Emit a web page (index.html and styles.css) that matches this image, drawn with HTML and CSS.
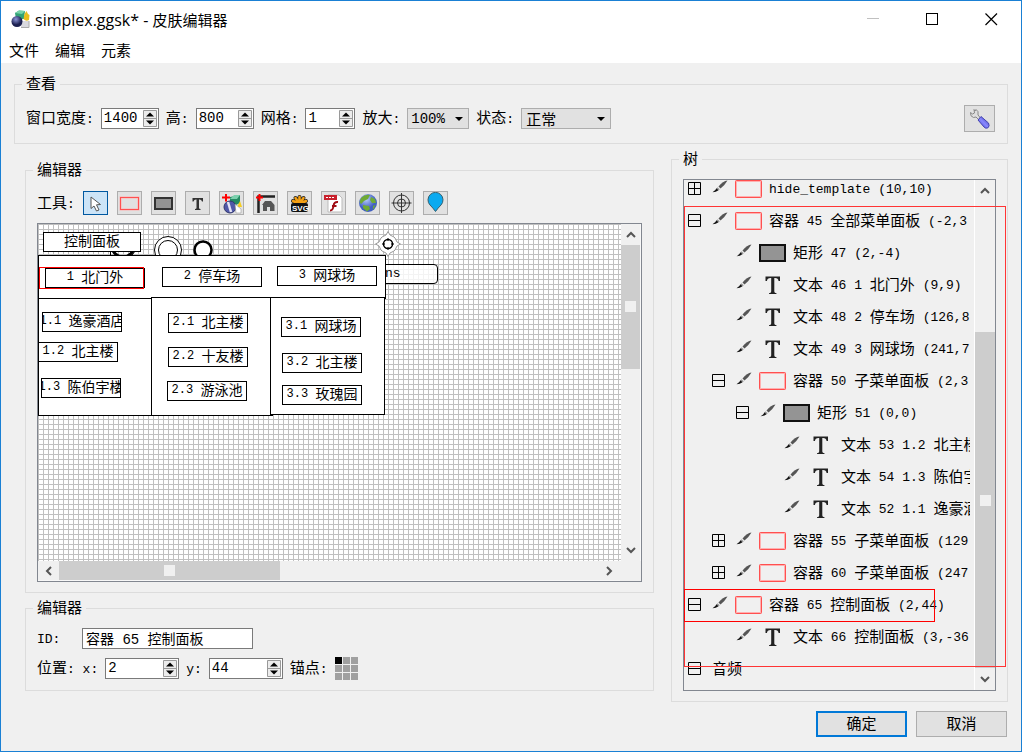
FILE: index.html
```html
<!DOCTYPE html>
<html lang="zh-CN">
<head>
<meta charset="utf-8">
<title>simplex.ggsk* - 皮肤编辑器</title>
<link rel="stylesheet" href="styles.css">
</head>
<body>
<svg class="defs" aria-hidden="true">
  <defs>
    <linearGradient id="handle" x1="0" y1="1" x2="1" y2="0"><stop offset="0" stop-color="#3838c0"/><stop offset=".5" stop-color="#8888ff"/><stop offset="1" stop-color="#2a2aa0"/></linearGradient>
    <radialGradient id="ball" cx=".4" cy=".3"><stop offset="0" stop-color="#8c94d8"/><stop offset="1" stop-color="#1c2050"/></radialGradient>
    <radialGradient id="sea" cx=".4" cy=".3"><stop offset="0" stop-color="#b8ccff"/><stop offset="1" stop-color="#4260c0"/></radialGradient>
    <symbol id="brush" viewBox="0 0 16 13"><path d="M15.500.500Q11 1 6.500 6.500L8.500 8.500Q13 5 15.500.500Z" fill="#555"/><path d="M5.500 7.200 7.800 9.200 6.500 10.300 4.500 8.500Z" fill="#999"/><path d="M4.500 8.300 6.500 10.200Q4 12 .500 12.200 3.500 10.800 4.500 8.300Z" fill="#111"/></symbol>
    <symbol id="box" viewBox="0 0 27 18"><rect x="1" y="1" width="25" height="16" rx="1" fill="none" stroke="#ffb0b0" stroke-width="2"/><rect x=".5" y=".5" width="26" height="17" rx="1" fill="none" stroke="#ff5050"/></symbol>
    <symbol id="rect" viewBox="0 0 27 18"><rect x="1" y="1" width="25" height="16" fill="#949494" stroke="#111" stroke-width="2"/></symbol>
    <symbol id="tee" viewBox="0 0 27 20"><path d="M6.500 1.500H21V6H19.600Q19.300 3 16 3H15.300V16.500Q15.300 18 17.500 18.200V19H10V18.200Q12.200 18 12.200 16.500V3H11.500Q8.200 3 7.900 6H6.500Z" fill="#222"/></symbol>
    <symbol id="up" viewBox="0 0 10 7"><path d="M1 6 5 2 9 6" fill="none" stroke="#555" stroke-width="2"/></symbol>
    <symbol id="down" viewBox="0 0 10 7"><path d="M1 1 5 5 9 1" fill="none" stroke="#555" stroke-width="2"/></symbol>
    <symbol id="minus" viewBox="0 0 13 13"><path d="M.5.5H12.500V12.500H.5ZM1 6.500H12" fill="none" stroke="#000"/></symbol>
    <symbol id="plus" viewBox="0 0 13 13"><path d="M.5.5H12.500V12.500H.5ZM1 6.500H12M6.500 1V12" fill="none" stroke="#000"/></symbol>
    <symbol id="spin" viewBox="0 0 14 17"><path d="M.5.5H13.500V16.500H.5ZM1 8.500H13" fill="#ececec" stroke="#999"/><path d="M3 6.500 7 2.500 11 6.500ZM3 10.500H11L7 14.500Z" fill="#000"/></symbol>
  </defs>
</svg>
<div class="window">
  <header class="titlebar">
    <svg class="logo" width="19" height="19" viewBox="0 0 19 19"><path d="M4 3 8 .5 14 1 13 9 5 9Z" fill="#32a276"/><path d="M4 3 8 .5 14 1 11 4Z" fill="#77d4aa"/><path d="M12.500 9 13.500 4 15.500 1 17 4 18.500 5 18 10Q15 12 12.500 9Z" fill="#e8be1c"/><path d="M10 11H18V18H10Z" fill="#d9d9df"/><path d="M10 17.500H18V11" stroke="#aaa" fill="none"/><circle cx="6" cy="11.500" r="5.500" fill="url(#ball)"/></svg>
    <h1>simplex.ggsk* - <span>皮肤编辑器</span></h1>
    <button class="win" aria-label="最小化"><svg width="13" height="13"><path d="M0 5.500H12" stroke="#c0c0c0"/></svg></button>
    <button class="win" aria-label="最大化"><svg width="13" height="13"><rect x=".5" y=".5" width="11" height="11" fill="none" stroke="#000"/></svg></button>
    <button class="win" aria-label="关闭"><svg width="13" height="13"><path d="M.5.5 12 12M12 .5.5 12" stroke="#000" stroke-width="1.200"/></svg></button>
  </header>
  <nav class="menu"><button>文件</button><button>编辑</button><button>元素</button></nav>

  <main>
    <fieldset class="view">
      <legend>查看</legend>
      <div class="row">
        <label for="w">窗口宽度<span class="m">:</span></label><span class="spin mid"><input id="w" value="1400"><svg><use href="#spin"/></svg></span>
        <label for="h">高<span class="m">:</span></label><span class="spin mid"><input id="h" value="800"><svg><use href="#spin"/></svg></span>
        <label for="g">网格<span class="m">:</span></label><span class="spin small"><input id="g" value="1"><svg><use href="#spin"/></svg></span>
        <label for="z">放大<span class="m">:</span></label><span class="drop zoom"><select id="z"><option>100%</option></select></span>
        <label for="s">状态<span class="m">:</span></label><span class="drop state"><select id="s"><option>正常</option></select></span>
        <button class="wrench" aria-label="设置"><svg width="22" height="22" viewBox="0 0 22 22"><path d="M5 1.500 5.500 5 3.500 6 1.500 4.500Q1 8.500 4.500 9.500L7 9 10.500 12.500 12 10.500 9 7Q10 3 7 1.500L6 3Z" fill="#ddd" stroke="#888"/><path d="M12 8.500 19.500 15Q21 18 19 19.800 16.500 21 15 19L9 12Z" fill="url(#handle)" stroke="#4444b0"/></svg></button>
      </div>
    </fieldset>

    <div class="columns">
      <div class="left">
        <fieldset class="editor">
          <legend>编辑器</legend>
          <div class="tools">
            <span class="tools-label">工具<span class="m">:</span></span>
            <button class="on" aria-label="选择"><svg viewBox="0 0 23 22"><path d="M7 5V16.500L10 14 12.500 19 15 18 12.500 12.800 16.500 12.500Z" fill="#fff" stroke="#555"/></svg></button>
            <button aria-label="容器"><svg viewBox="0 0 23 22"><rect x="2.500" y="5.500" width="18" height="12" fill="none" stroke="#ffb0b0" stroke-width="2"/><rect x="2.500" y="5.500" width="18" height="12" fill="none" stroke="#ff5050"/></svg></button>
            <button aria-label="矩形"><svg viewBox="0 0 23 22"><rect x="3" y="6" width="17" height="11" fill="#949494" stroke="#333" stroke-width="2"/></svg></button>
            <button aria-label="文本"><svg viewBox="0 0 23 22"><path d="M6.500 6H17V9.500H16Q15.500 7.500 13.500 7.500H13V16Q13 17 14.500 17V18H9V17Q10.500 17 10.500 16V7.500H10Q8 7.500 7.500 9.500H6.500Z" fill="#333"/></svg></button>
            <button aria-label="图片"><svg viewBox="0 0 23 22"><path d="M10 5 20 3 20 11 16 13 10 11Z" fill="#248a62"/><path d="M10 7 14 3H20L17 7Z" fill="#7bd0ad"/><path d="M17 15 20 9 22 15Z" fill="#f5ce20"/><circle cx="10" cy="15" r="6" fill="#5058a8" stroke="#30366c"/><path d="M8 10 11 20" stroke="#e4e4f4" stroke-width="2.500"/><path d="M15 12 21 17V21H16Z" fill="#fff" stroke="#888" stroke-width=".5"/><path d="M2 5.500H10M6 2V9.500" stroke="#f00" stroke-width="2"/></svg></button>
            <button aria-label="按钮"><svg viewBox="0 0 23 22"><path d="M4.500 21V4.500H21" stroke="#222" stroke-width="2.500" fill="none"/><path d="M8 13 11 9H17L20.500 13V19H16V15H13V19H9V13Z" fill="#555"/><path d="M2 5.500H9M5.500 2V9" stroke="#f00" stroke-width="2"/></svg></button>
            <button aria-label="SVG"><svg viewBox="0 0 23 22"><g stroke="#222" stroke-width="4" stroke-linecap="round"><path d="M11.500 12V5M11.500 12 5 9M11.500 12 18 9M11.500 12 7.500 6M11.500 12 15.500 6"/></g><g stroke="#f4a013" stroke-width="2.500" stroke-linecap="round"><path d="M11.500 12V5M11.500 12 5 9M11.500 12 18 9M11.500 12 7.500 6M11.500 12 15.500 6"/></g><rect x="3" y="11" width="17" height="9" rx="2" fill="#111"/><text x="4" y="19" font-family="Liberation Sans" font-size="8" font-weight="700" fill="#fff">SVG</text></svg></button>
            <button aria-label="SWF"><svg viewBox="0 0 23 22"><path d="M6 3H17L20 6V20H6Z" fill="#fff" stroke="#bbb"/><path d="M2 3H15V8H2Z" fill="#c8202c"/><path d="M4 5.500H12" stroke="#fff" stroke-width="1" stroke-dasharray="2 1"/><path d="M16 10Q12 9.500 11.500 14T8 18.500M10 14H14.500" stroke="#a00c14" stroke-width="2" fill="none"/></svg></button>
            <button aria-label="链接"><svg viewBox="0 0 23 22"><circle cx="12" cy="11" r="9" fill="url(#sea)"/><path d="M5 6Q9 2 14 3L12 7 8 9 5 12 3.500 10ZM15 5 19 7 20 11 16 11 14 8ZM7 13 13 14 14 17 11 19.500 7 16ZM17 14 19.500 13 17 18Z" fill="#6faa35"/></svg></button>
            <button aria-label="热点"><svg viewBox="0 0 23 22"><g fill="none" stroke="#333"><circle cx="11.500" cy="11" r="8"/><circle cx="11.500" cy="11" r="4"/><path d="M1.500 11H21.500M11.500 1V21"/></g></svg></button>
            <button aria-label="标记"><svg viewBox="0 0 23 22"><path d="M11.500 19.500Q9 16 6 13A7.500 7.500 0 1 1 17 13Q14 16 11.500 19.500Z" fill="#0aaaf0" stroke="#36606e"/></svg></button>
          </div>

          <div class="canvas">
            <div class="stage">
              <svg class="rings" width="200" height="50" viewBox="0 0 200 50"><g fill="none" stroke="#000"><circle cx="85" cy="22" r="11" stroke-width="3"/><path d="M72.500 26V31M98 26 94 31"/><circle cx="130" cy="26" r="13.500" fill="#fff"/><circle cx="130" cy="26" r="9.500" fill="#fff"/><circle cx="165" cy="26" r="8.500" stroke-width="2.500" fill="#fff"/></g></svg>
              <svg class="gear" width="26" height="26" viewBox="0 0 26 26"><path d="M13 .5 15 4 19 6 20 7 22 11 25.500 13 22 15 20 19 19 20 15 22 13 25.500 11 22 7 20 6 19 4 15 .5 13 4 11 6 7 7 6 11 4Z" fill="#fff" stroke="#999"/><circle cx="13" cy="13" r="4.500" fill="none" stroke="#000" stroke-width="1.500"/><path d="M13 7V10M13 16V19M7 13H10M16 13H19" stroke="#000"/></svg>
              <div class="hint">ns</div>
              <div class="panel p0"></div><div class="panel p1"></div><div class="panel p2"></div><div class="panel p3"></div>
              <div class="tag ctrl">控制面板</div>
              <div class="tag head t1"><i>1 </i>北门外</div>
              <div class="picked"></div>
              <div class="tag head t2"><i>2 </i>停车场</div>
              <div class="tag head t3"><i>3 </i>网球场</div>
              <div class="tag a1"><i>1.1 </i>逸豪酒店</div>
              <div class="tag a2"><i>1.2 </i>北主楼</div>
              <div class="tag a3"><i>1.3 </i>陈伯宇楼</div>
              <div class="tag b1"><i>2.1 </i>北主楼</div>
              <div class="tag b2"><i>2.2 </i>十友楼</div>
              <div class="tag b3"><i>2.3 </i>游泳池</div>
              <div class="tag c1"><i>3.1 </i>网球场</div>
              <div class="tag c2"><i>3.2 </i>北主楼</div>
              <div class="tag c3"><i>3.3 </i>玫瑰园</div>
            </div>
            <div class="vbar"><svg width="10" height="7"><use href="#up"/></svg><div class="track"><div class="thumb"></div></div><svg width="10" height="7"><use href="#down"/></svg></div>
            <div class="hbar"><svg width="7" height="10"><path d="M6 1 2 5 6 9" fill="none" stroke="#555" stroke-width="2"/></svg><div class="track"><div class="thumb"></div></div><svg width="7" height="10"><path d="M1 1 5 5 1 9" fill="none" stroke="#555" stroke-width="2"/></svg></div>
          </div>
        </fieldset>

        <fieldset class="props">
          <legend>编辑器</legend>
          <div class="row id-row"><label for="id"><span class="m">ID:</span></label><input id="id" class="text" value="容器 65 控制面板"></div>
          <div class="row"><label for="x">位置<span class="m">: x:</span></label><span class="spin wide"><input id="x" value="2"><svg><use href="#spin"/></svg></span>
            <label for="y"><span class="m">y:</span></label><span class="spin wide"><input id="y" value="44"><svg><use href="#spin"/></svg></span>
            <span>锚点<span class="m">:</span></span>
            <div class="anchor"><button class="on" aria-label="左上"></button><button aria-label="上"></button><button aria-label="右上"></button><button aria-label="左"></button><button aria-label="中"></button><button aria-label="右"></button><button aria-label="左下"></button><button aria-label="下"></button><button aria-label="右下"></button></div></div>
        </fieldset>
      </div>

      <div class="right">
        <fieldset class="treeset">
          <legend>树</legend>
          <div class="tree">
            <ul>
              <li><button aria-label="展开"><svg><use href="#plus"/></svg></button><svg class="br"><use href="#brush"/></svg><svg class="ic"><use href="#box"/></svg><span class="m">hide_template (10,10)</span></li>
              <li><button aria-label="折叠"><svg><use href="#minus"/></svg></button><svg class="br"><use href="#brush"/></svg><svg class="ic"><use href="#box"/></svg>容器<span class="m"> 45 </span>全部菜单面板<span class="m"> (-2,3</span></li>
              <li class="l1 leaf"><svg class="br"><use href="#brush"/></svg><svg class="ic"><use href="#rect"/></svg>矩形<span class="m"> 47 (2,-4)</span></li>
              <li class="l1 leaf"><svg class="br"><use href="#brush"/></svg><svg class="ic"><use href="#tee"/></svg>文本<span class="m"> 46 1 </span>北门外<span class="m"> (9,9)</span></li>
              <li class="l1 leaf"><svg class="br"><use href="#brush"/></svg><svg class="ic"><use href="#tee"/></svg>文本<span class="m"> 48 2 </span>停车场<span class="m"> (126,8</span></li>
              <li class="l1 leaf"><svg class="br"><use href="#brush"/></svg><svg class="ic"><use href="#tee"/></svg>文本<span class="m"> 49 3 </span>网球场<span class="m"> (241,7</span></li>
              <li class="l1"><button aria-label="折叠"><svg><use href="#minus"/></svg></button><svg class="br"><use href="#brush"/></svg><svg class="ic"><use href="#box"/></svg>容器<span class="m"> 50 </span>子菜单面板<span class="m"> (2,3</span></li>
              <li class="l2"><button aria-label="折叠"><svg><use href="#minus"/></svg></button><svg class="br"><use href="#brush"/></svg><svg class="ic"><use href="#rect"/></svg>矩形<span class="m"> 51 (0,0)</span></li>
              <li class="l3 leaf"><svg class="br"><use href="#brush"/></svg><svg class="ic"><use href="#tee"/></svg>文本<span class="m"> 53 1.2 </span>北主楼</li>
              <li class="l3 leaf"><svg class="br"><use href="#brush"/></svg><svg class="ic"><use href="#tee"/></svg>文本<span class="m"> 54 1.3 </span>陈伯宇楼</li>
              <li class="l3 leaf"><svg class="br"><use href="#brush"/></svg><svg class="ic"><use href="#tee"/></svg>文本<span class="m"> 52 1.1 </span>逸豪酒店</li>
              <li class="l1"><button aria-label="展开"><svg><use href="#plus"/></svg></button><svg class="br"><use href="#brush"/></svg><svg class="ic"><use href="#box"/></svg>容器<span class="m"> 55 </span>子菜单面板<span class="m"> (129</span></li>
              <li class="l1"><button aria-label="展开"><svg><use href="#plus"/></svg></button><svg class="br"><use href="#brush"/></svg><svg class="ic"><use href="#box"/></svg>容器<span class="m"> 60 </span>子菜单面板<span class="m"> (247</span></li>
              <li><button aria-label="折叠"><svg><use href="#minus"/></svg></button><svg class="br"><use href="#brush"/></svg><svg class="ic"><use href="#box"/></svg>容器<span class="m"> 65 </span>控制面板<span class="m"> (2,44)</span></li>
              <li class="l1 leaf"><svg class="br"><use href="#brush"/></svg><svg class="ic"><use href="#tee"/></svg>文本<span class="m"> 66 </span>控制面板<span class="m"> (3,-36</span></li>
              <li><button aria-label="折叠"><svg><use href="#minus"/></svg></button>音频</li>
            </ul>
            <div class="vbar"><svg width="10" height="7"><use href="#up"/></svg><div class="track"><div class="thumb"></div></div><svg width="10" height="7"><use href="#down"/></svg></div>
            <div class="mark mark-all"></div>
            <div class="mark mark-one"></div>
          </div>
        </fieldset>
        <div class="actions"><button class="primary">确定</button><button>取消</button></div>
      </div>
    </div>
  </main>
</div>
</body>
</html>
```
FILE: styles.css
```css
* { box-sizing: border-box; }
body { margin: 0; color: #000; font: 15px/20px "Noto Sans CJK SC", sans-serif; }
button, input, select { font: inherit; color: inherit; margin: 0; padding: 0; border: 0; background: none; border-radius: 0; outline: 0; }
button svg, .spin svg { display: block; }
.defs { position: absolute; width: 0; height: 0; }
.m { font-family: "Liberation Mono", monospace; font-size: 13px; white-space: pre; }

.window { min-height: 100vh; display: flex; flex-direction: column; border: 1px solid #1a80d4; background: #f0f0f0; }
.titlebar { height: 37px; display: flex; align-items: center; background: #fff; padding: 0 0 0 10px; }
.titlebar h1 { flex: 1; margin: 0 0 0 5px; font: 16px/20px "Open Sans", sans-serif; }
.titlebar h1 span { font: 15px/18px "Noto Sans CJK SC", sans-serif; }
.win { width: 59px; height: 37px; display: flex; align-items: center; justify-content: center; }
.menu { height: 25px; display: flex; gap: 16px; padding: 0 0 2px 8px; background: #fff; }

main { flex: 1; display: flex; flex-direction: column; padding: 11px 13px 14px; }
fieldset { margin: 0; min-width: 0; border: 1px solid #dcdcdc; }
legend { height: 20px; padding: 0 4px; line-height: 18px; }
.row { display: flex; align-items: center; gap: 7px; }

.view { padding: 11px 12px 11px 7px; }
.view .row { height: 27px; padding-left: 4px; }
.wrench { width: 31px; height: 27px; margin-left: auto; border: 1px solid #adadad; background: #e1e1e1; display: flex; align-items: center; justify-content: center; }

.spin { height: 21px; display: flex; align-items: center; padding-right: 1px; border: 1px solid #7a7a7a; background: #fff; }
.spin input { flex: 1; min-width: 0; height: 19px; padding-left: 2px; font: 14px/19px "Liberation Mono", monospace; }
.spin svg { width: 14px; height: 17px; flex: none; }
.mid { width: 58px; }
.small { width: 50px; }
.wide { width: 74px; }

.drop { position: relative; height: 21px; border: 1px solid #adadad; background: #e1e1e1; }
.drop select { width: 100%; height: 19px; padding-left: 4px; appearance: none; display: block; line-height: 19px; }
.drop::after { content: ""; position: absolute; right: 5px; top: 8px; border: 4px solid transparent; border-top-color: #000; border-bottom: 0; pointer-events: none; }
.zoom { width: 62px; }
.drop.zoom select { font: 14px/19px "Liberation Mono", monospace; padding: 1px 0 0 3px; }
.state { width: 90px; }

.columns { flex: 1; display: grid; grid-template-columns: minmax(0, 1fr) 337px; gap: 17px; padding-left: 11px; }
.left { display: flex; flex-direction: column; gap: 5px; padding: 16px 0 46px; }
.right { display: flex; flex-direction: column; gap: 9px; padding-top: 5px; }

.editor { flex: 1; display: flex; flex-direction: column; padding: 11px 11px 10px; }
.editor legend, .props legend { margin-left: -4px; }
.tools { display: flex; align-items: center; gap: 9px; margin-bottom: 8px; }
.tools-label { width: 37px; white-space: nowrap; }
.tools button { width: 25px; height: 24px; border: 1px solid #adadad; background: #e1e1e1; }
.tools button svg { width: 23px; height: 22px; }
.tools .on { border-color: #0058a0; background: #cce4f7; }

.canvas { flex: 1; display: grid; grid-template: minmax(0, 1fr) 20px / minmax(0, 1fr) 20px; border: 1px solid #828790; }
.stage { position: relative; overflow: hidden; background: repeating-linear-gradient(90deg, #c0c0c0 0 1px, transparent 1px 5px), repeating-linear-gradient(#c0c0c0 0 1px, transparent 1px 5px), #fff; font-size: 14px; }
.hbar, .vbar { display: flex; align-items: center; background: #f0f0f0; }
.hbar { padding: 0 7px; margin-right: 1px; gap: 7px; border-bottom: 1px solid #f8f8f8; }
.vbar { flex-direction: column; }
.canvas .vbar { padding: 7px 0; gap: 7px; border-right: 1px solid #f8f8f8; }
.track { flex: 1; align-self: stretch; display: flex; }
.vbar .track { flex-direction: column; }
.thumb { display: flex; align-items: center; justify-content: center; background: #cdcdcd; }
.thumb::before { content: ""; width: 11px; height: 11px; background: #f0f0f0; }
.canvas .vbar .thumb { height: 42%; }
.hbar .thumb { width: 41%; }

.stage > * { position: absolute; }
.rings { left: 0; top: 0; }
.gear { left: 337px; top: 7px; }
.hint { left: 300px; top: 40px; width: 100px; height: 20px; padding-left: 46px; border: 1px solid #000; border-radius: 4px; background: rgba(255, 255, 255, .8); font: 13px/18px "Liberation Mono", monospace; }
.panel { border: 1px solid #000; background: #fff; }
.p0 { left: 0; top: 31px; width: 348px; height: 44px; }
.p1 { left: 0; top: 74px; width: 114px; height: 118px; }
.p2 { left: 113px; top: 73px; width: 122px; height: 119px; }
.p3 { left: 232px; top: 73px; width: 115px; height: 118px; }
.tag { width: 80px; height: 20px; display: flex; justify-content: center; overflow: hidden; border: 1px solid #000; background: #fff; line-height: 14px; white-space: nowrap; }
.tag i { flex: none; font: 12px/17px "Liberation Mono", monospace; white-space: pre; }
.head { width: 100px; }
.ctrl { left: 5px; top: 8px; width: 98px; }
.t1 { left: 7px; top: 44px; }
.t2 { left: 124px; top: 43px; }
.t3 { left: 239px; top: 42px; }
.picked { left: 1px; top: 43px; width: 105px; height: 22px; border: 1px solid #f00; }
.a1 { left: 4px; top: 88px; }
.a2 { left: 0; top: 118px; }
.a3 { left: 3px; top: 154px; }
.b1 { left: 130px; top: 89px; }
.b2 { left: 130px; top: 123px; }
.b3 { left: 129px; top: 157px; }
.c1 { left: 243px; top: 93px; }
.c2 { left: 244px; top: 129px; }
.c3 { left: 244px; top: 161px; }

.props { padding: 9px 11px 10px; display: flex; flex-direction: column; gap: 7px; }
.id-row label { width: 38px; }
.text { width: 171px; height: 21px; padding: 0 0 2px 3px; border: 1px solid #7a7a7a; background: #fff; font: 14px/17px "Liberation Mono", "Noto Sans CJK SC", monospace; }
.anchor { width: 23px; height: 23px; display: grid; grid-template-columns: repeat(3, 1fr); gap: 1px; }
.anchor button { background: #a0a0a0; }
.anchor .on { background: #000; }

.treeset { flex: 1; display: flex; flex-direction: column; padding: 10px 11px; }
.treeset legend { margin-left: -4px; }
.tree { position: relative; flex: 1; display: flex; border: 1px solid #828790; }
.tree ul { flex: 1; min-width: 0; height: 509px; margin: 0 4px 0 0; padding: 0 0 0 4px; overflow: hidden; list-style: none; }
.tree li { height: 32px; display: flex; align-items: center; padding-bottom: 2px; white-space: nowrap; }
.tree li:first-child { margin-top: -7px; }
.tree li > * { flex: none; }
.tree li .m { padding-top: 3px; }
.tree li button { width: 24px; }
.tree li button svg { width: 13px; height: 13px; }
.br { width: 16px; height: 13px; margin: 0 7px 4px 0; }
.ic { width: 27px; height: 20px; margin: 2px 7px 0 0; }
.tree .l1 { padding-left: 24px; }
.tree .l2 { padding-left: 48px; }
.tree .l3 { padding-left: 72px; }
.tree .leaf::before { content: ""; width: 24px; flex: none; }
.tree .vbar { width: 21px; padding: 7px 0; gap: 8px; border-left: 1px solid #fff; }
.tree .track { justify-content: flex-end; }
.tree .vbar .thumb { height: 72%; }
.mark { position: absolute; left: 0; pointer-events: none; border: 1px solid #ff3434; }
.mark-all { top: 26px; width: 322px; height: 461px; }
.mark-one { top: 409px; width: 251px; height: 33px; border-color: #f00; }

.actions { display: flex; justify-content: flex-end; gap: 9px; padding-right: 1px; }
.actions button { width: 91px; height: 26px; border: 1px solid #adadad; background: #e1e1e1; line-height: 18px; padding-bottom: 2px; }
.actions .primary { border: 2px solid #0078d7; }
```
